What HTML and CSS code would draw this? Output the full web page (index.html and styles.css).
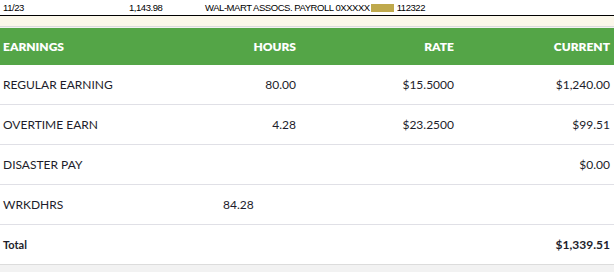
FILE: index.html
```html
<!DOCTYPE html>
<html>
<head>
<meta charset="utf-8">
<link rel="stylesheet" href="styles.css">
</head>
<body>
<div class="txn">
  <span class="t-date">11/23</span>
  <span class="t-amt">1,143.98</span>
  <span class="t-desc">WAL-MART ASSOCS. PAYROLL 0XXXXX<span class="mask"></span> 112322</span>
</div>
<div class="cream"></div>
<div class="table">
  <div class="row head">
    <div class="c1">EARNINGS</div>
    <div class="c2">HOURS</div>
    <div class="c3">RATE</div>
    <div class="c4">CURRENT</div>
  </div>
  <div class="row">
    <div class="c1">REGULAR EARNING</div>
    <div class="c2">80.00</div>
    <div class="c3">$15.5000</div>
    <div class="c4">$1,240.00</div>
  </div>
  <div class="row">
    <div class="c1">OVERTIME EARN</div>
    <div class="c2">4.28</div>
    <div class="c3">$23.2500</div>
    <div class="c4">$99.51</div>
  </div>
  <div class="row">
    <div class="c1">DISASTER PAY</div>
    <div class="c2"></div>
    <div class="c3"></div>
    <div class="c4">$0.00</div>
  </div>
  <div class="row">
    <div class="c1">WRKDHRS</div>
    <div class="c2 left">84.28</div>
    <div class="c3"></div>
    <div class="c4"></div>
  </div>
  <div class="row total">
    <div class="c1">Total</div>
    <div class="c2"></div>
    <div class="c3"></div>
    <div class="c4">$1,339.51</div>
  </div>
</div>
</body>
</html>
```

FILE: styles.css
```css
html, body {
  margin: 0;
  padding: 0;
  background: #f2f2f2;
}
body {
  width: 614px;
  height: 272px;
  overflow: hidden;
}
.txn {
  background: #fff;
  height: 15px;
  border-bottom: 1px solid #000;
  font-family: "Liberation Sans", Arial, sans-serif;
  font-size: 9.5px;
  line-height: 15px;
  color: #000;
  display: flex;
  letter-spacing: -0.45px;
}
.t-date { width: 126px; padding-left: 3px; }
.t-amt { width: 76px; }
.t-desc { display: flex; align-items: center; }
.mask {
  display: inline-block;
  width: 23px;
  height: 8px;
  background: #bfa94c;
  margin: 0 3px 0 1px;
}
.cream {
  height: 10px;
  background: #fbf7ea;
  border-bottom: 1px solid #dcdcdc;
  margin-bottom: 1px;
}
.table {
  background: #fff;
  font-family: Lato, "Open Sans", sans-serif;
  font-size: 12px;
  color: #1d1d2b;
  border-bottom: 1px solid #dcdcdc;
}
.row {
  display: grid;
  grid-template-columns: 219px 81px 158px 156px;
  height: 39px;
  align-items: center;
  border-bottom: 1px solid #e0e0e6;
}
.row > div { text-align: right; padding-right: 4px; }
.row > .c1 { text-align: left; padding-left: 3px; }
.row > .left { text-align: left; padding-left: 4px; }
.head {
  background: #54a547;
  color: #fff;
  font-weight: 800;
  height: 37px;
  border-bottom: 0;
  font-size: 12px;
}
.total { font-weight: 700; }
.total .c1 { font-size: 11px; }
.row.total { border-bottom: 0; }
```
